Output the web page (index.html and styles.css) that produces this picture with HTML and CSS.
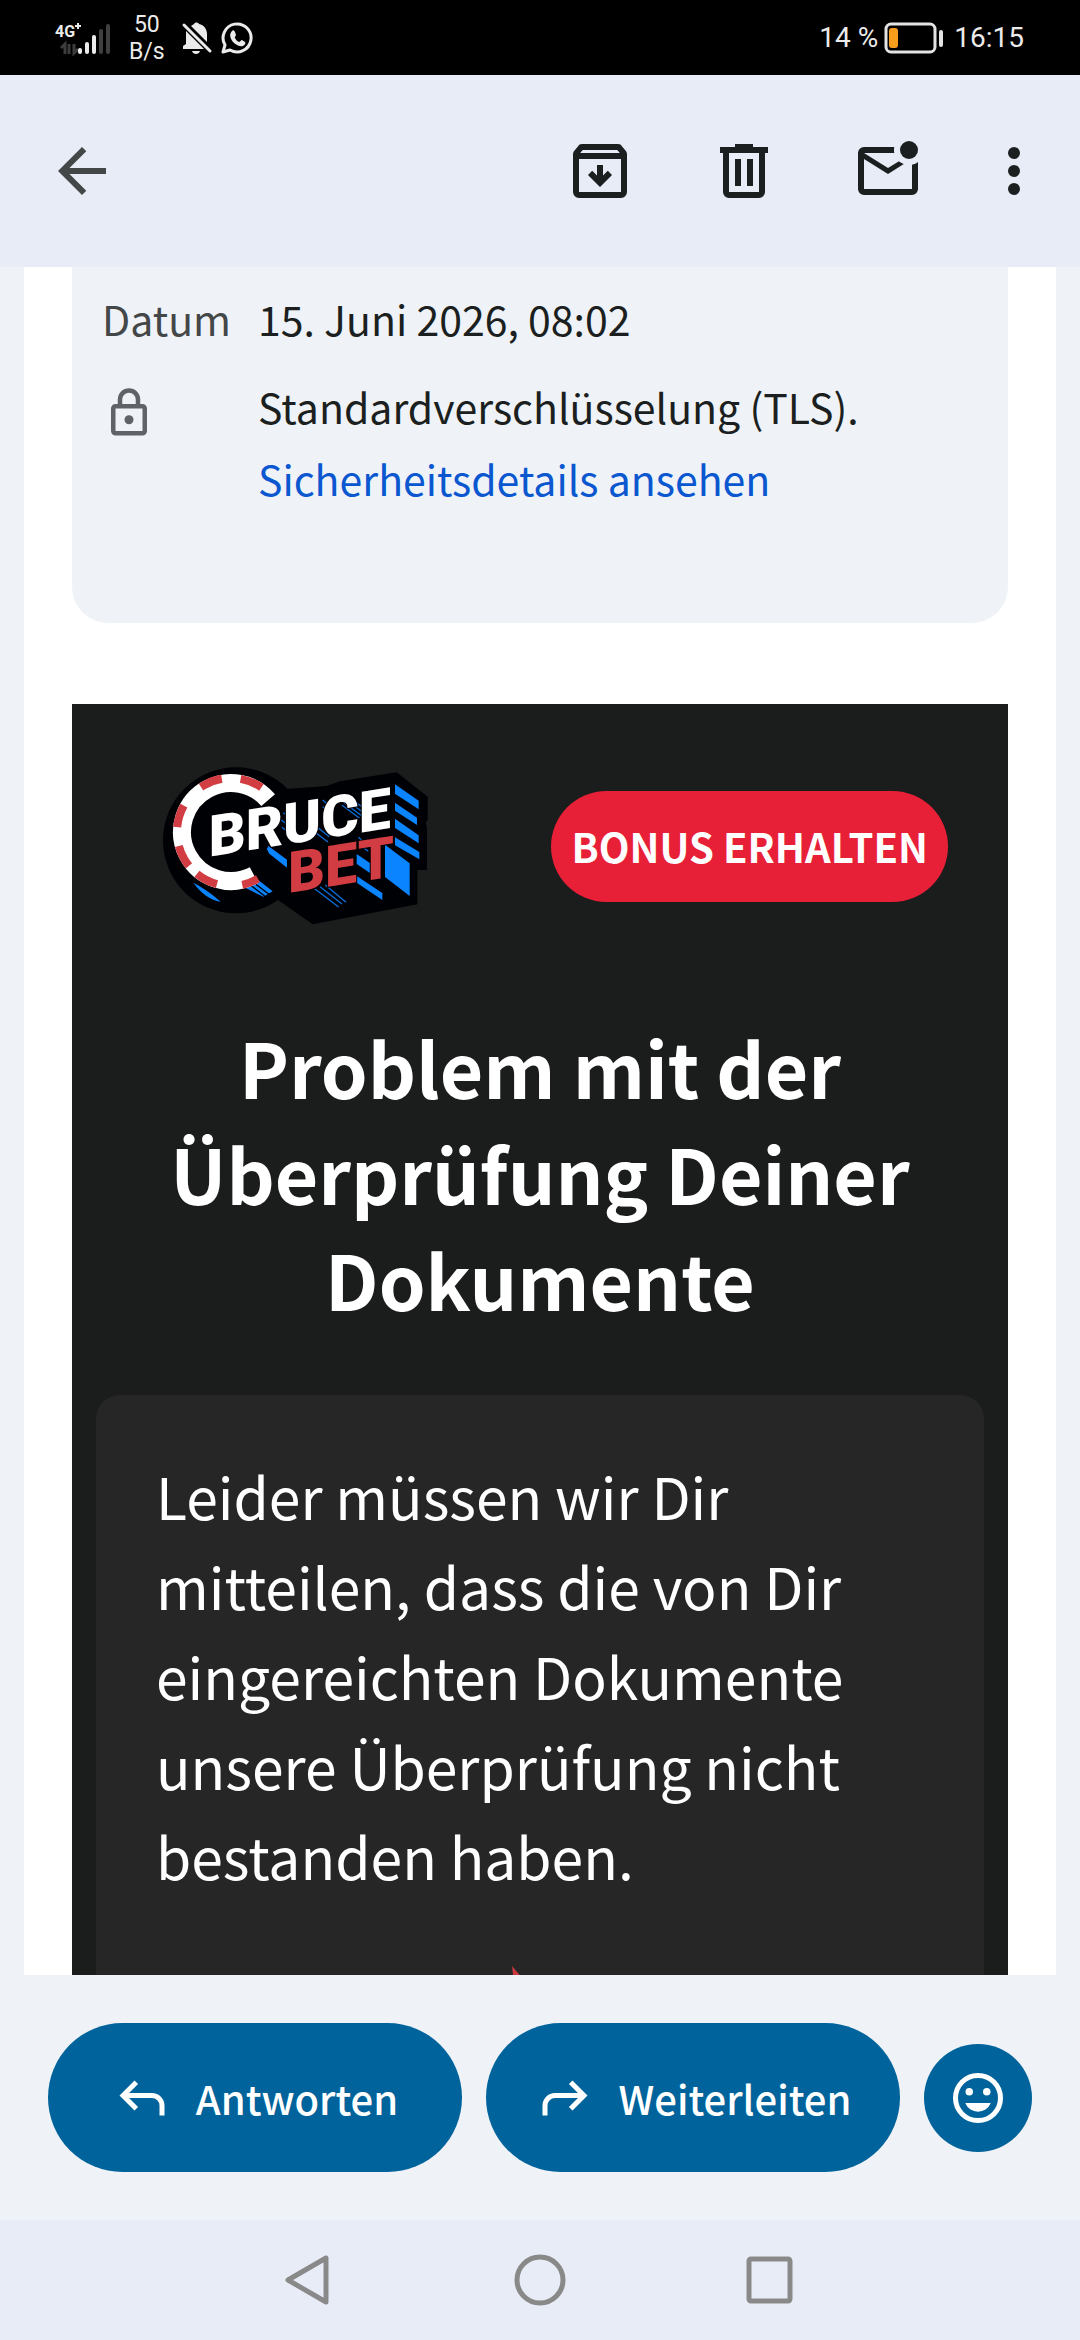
FILE: index.html
```html
<!DOCTYPE html>
<html lang="de">
<head>
    <meta charset="UTF-8">
    <meta name="viewport" content="width=device-width, initial-scale=1.0">
    <title>Problem mit der Überprüfung Deiner Dokumente</title>
    <link rel="stylesheet" href="styles.css">
</head>
<body>

    <!-- Status bar -->
    <div class="status">
        <div class="status-left">
            <svg class="signal" viewBox="0 0 56 36" aria-hidden="true">
                <text x="0" y="17" class="net">4G</text>
                <path d="M20 6h6M23 3v6" stroke="#ebebeb" stroke-width="2"/>
                <path d="M6 28l4-4v10M14 24v10M19 24v9l4-4" fill="none" stroke="#3c3c3c" stroke-width="3"/>
                <g fill="#ebebeb">
                    <rect x="23" y="28" width="4" height="6" rx="2"/>
                    <rect x="30" y="22" width="4" height="12" rx="2"/>
                    <rect x="37" y="15" width="4" height="19" rx="2"/>
                </g>
                <g fill="#3f3f3f">
                    <rect x="44" y="9" width="4" height="25" rx="2"/>
                    <rect x="51" y="4" width="4" height="30" rx="2"/>
                </g>
            </svg>
            <div class="speed">50<br>B/s</div>
            <svg class="status-icon bell" viewBox="0 0 32 32" aria-hidden="true">
                <path d="M5 9L23 27H2v-3l3-2zM10 4c1-1 2-1 3-2 1-2 4-2 5 0 5 1 8 5 8 10v8z" fill="#ebebeb"/>
                <path d="M11 29h8c-1 4-7 4-8 0z" fill="#ebebeb"/>
                <path d="M3 3l26 26" stroke="#ebebeb" stroke-width="3" stroke-linecap="round"/>
            </svg>
            <svg class="status-icon" viewBox="0 0 32 32" aria-hidden="true">
                <path d="M2 30l2-7a14 14 0 1 1 5 5z" fill="none" stroke="#ebebeb" stroke-width="3" stroke-linejoin="round"/>
                <path d="M11 9c1-1 2-1 3 1l1 3c0 1-2 2-1 3 1 2 2 3 4 4 1 0 2-2 3-2l3 2c1 1 0 3-2 4-3 1-7-1-10-4-3-4-4-8-1-11z" fill="#ebebeb"/>
            </svg>
        </div>
        <div class="status-right">
            <span>14 %</span>
            <svg class="battery" viewBox="0 0 60 34" aria-hidden="true">
                <rect x="2" y="3" width="49" height="28" rx="5" fill="none" stroke="#e4e4e4" stroke-width="3"/>
                <rect x="5" y="7" width="9" height="20" rx="3" fill="#f99d1c"/>
                <rect x="55" y="9" width="4" height="17" rx="2" fill="#e4e4e4"/>
            </svg>
            <span>16:15</span>
        </div>
    </div>

    <!-- Toolbar -->
    <header class="toolbar">
        <button class="icon-btn back" aria-label="Zurück">
            <svg viewBox="0 0 24 24"><path d="m7.825 13 5.6 5.6L12 20l-8-8 8-8 1.425 1.4-5.6 5.6H20v2Z"/></svg>
        </button>
        <button class="icon-btn" aria-label="Archivieren">
            <svg viewBox="0 0 24 24"><path fill-rule="evenodd" d="M5 21q-.825 0-1.413-.587Q3 19.825 3 19V6.525q0-.35.113-.675.112-.325.337-.6L4.7 3.725q.2-.35.5-.538Q5.5 3 6 3h12q.5 0 .8.187.3.188.5.538l1.25 1.525q.225.275.337.6.113.325.113.675V19q0 .825-.587 1.413Q19.825 21 19 21Zm.4-15h13.2l-.85-1H6.25ZM5 8v11h14V8Zm7 9.3 4-4-1.4-1.4-1.6 1.6V10h-2v3.5l-1.6-1.6L8 13.3Z"/></svg>
        </button>
        <button class="icon-btn" aria-label="Löschen">
            <svg viewBox="0 0 24 24"><path fill-rule="evenodd" d="M7 21q-.825 0-1.413-.587Q5 19.825 5 19V6H4V4h5V3h6v1h5v2h-1v13q0 .825-.587 1.413Q17.825 21 17 21ZM17 6H7v13h10ZM9 17h2V8H9Zm4 0h2V8h-2Z"/></svg>
        </button>
        <button class="icon-btn" aria-label="Als ungelesen markieren">
            <svg viewBox="0 0 24 24"><path fill-rule="evenodd" d="M4 20q-.825 0-1.413-.587Q2 18.825 2 18V6q0-.825.587-1.412Q3.175 4 4 4h10.1q-.1.5-.1 1t.1 1H4l8 5 3.65-2.275q.35.325.763.562.412.238.862.413L12 13 4 8v10h16V9.9q.575-.125 1.075-.35.5-.225.925-.55v9q0 .825-.587 1.413Q20.825 20 20 20Z"/><circle cx="19" cy="5" r="3"/></svg>
        </button>
        <button class="icon-btn more" aria-label="Weitere Optionen">
            <svg viewBox="0 0 24 24"><circle cx="12" cy="6" r="2"/><circle cx="12" cy="12" r="2"/><circle cx="12" cy="18" r="2"/></svg>
        </button>
    </header>

    <!-- Message -->
    <main class="message">
        <section class="details">
            <div class="details-row">
                <span class="label">Datum</span>
                <span>15. Juni 2026, 08:02</span>
            </div>
            <div class="details-row">
                <svg class="lock" viewBox="0 0 24 24" aria-hidden="true">
                    <rect x="5" y="9" width="14" height="12" rx="1" fill="none" stroke="#5f6368" stroke-width="2"/>
                    <path d="M8 9V6a4 4 0 0 1 8 0v3" fill="none" stroke="#5f6368" stroke-width="2"/>
                    <circle cx="12" cy="15" r="2" fill="#5f6368"/>
                </svg>
                <div>
                    Standardverschlüsselung (TLS).<br>
                    <a href="#">Sicherheitsdetails ansehen</a>
                </div>
            </div>
        </section>

        <article class="mail">
            <div class="mail-header">
                <svg class="logo" viewBox="66 75 804 486" role="img" aria-label="Bruce Bet">
                    <g fill="#000105">
                        <circle cx="288" cy="301" r="219"/>
                        <path d="M400 145l30 3 130-10 40-14 170-27 93 73v70l-6 6 4 20v124h-29v103l-314 60-118-83z"/>
                    </g>
                    <!-- blue depth -->
                    <g fill="#0a84ff">
                        <path d="M765 133l71 49v26l-71-47zM765 188l66 45v22l-66-43zM765 236l71 50v24l-71-46zM765 292l73 44v22l-73-42z"/>
                        <path d="M735 314l74 56v98l-74-57z"/>
                        <path d="M650 342l41 28v30l-41-28zM650 408l77 51v21l-77-52z"/>
                        <path d="M368 305l73 54v24l-53-42z"/>
                        <path d="M160 428q40 20 82 57-46-7-82-57z"/>
                        <path d="M350 416l48 38-28 16-66-32z"/>
                    </g>
                    <g stroke="#0a6fd8" stroke-width="4" fill="none">
                        <path d="M524 446l72 55M540 440l66 52M556 435l62 52"/>
                        <path d="M424 240l32 24M426 262l36 28M430 218l20 16M524 276l40 30M532 262l36 28M548 180l14 12M548 200l14 12"/>
                        <path d="M606 196l52 38M606 184l60 44M614 176l54 40M624 170l44 32M655 292l24 20M655 312l30 22"/>
                    </g>
                    <g stroke="#000105" stroke-width="4"><path d="M322 428l52 40M336 424l50 38"/></g>
                    <!-- chip -->
                    <circle cx="270" cy="272" r="124" fill="#000105"/>
                    <circle cx="273" cy="276" r="147" fill="none" stroke="#fff" stroke-width="54" pathLength="360" stroke-dasharray="257 103" transform="rotate(62 273 276)"/>
                    <circle cx="273" cy="276" r="162" fill="none" stroke="#d13d42" stroke-width="24" pathLength="360" stroke-dasharray="18 27 24 12 24 20 24 27 24 20 24 116" transform="rotate(60 273 276)"/>
                    <text x="206" y="350" class="logo-text white" transform="skewY(-9)" transform-origin="206 350">BRUCE</text>
                    <text x="444" y="459" class="logo-text red" transform="skewY(-9)" transform-origin="444 459">BET</text>
                </svg>
                <a class="bonus" href="#">BONUS ERHALTEN</a>
            </div>

            <h1>Problem mit der Überprüfung Deiner Dokumente</h1>

            <div class="mail-body">
                <p>Leider müssen wir Dir mitteilen, dass die von Dir eingereichten Dokumente unsere Überprüfung nicht bestanden haben.</p>
                <svg class="cross" viewBox="0 0 60 60" aria-hidden="true"><path d="M1 0l12 14 20 46H8z" fill="#c8383c"/></svg>
            </div>
        </article>
    </main>

    <!-- Reply actions -->
    <footer class="actions">
        <button class="action">
            <svg viewBox="0 0 24 24" aria-hidden="true"><path d="M19 19v-4q0-1.25-.875-2.125T16 12H6.825l3.6 3.6L9 17l-6-6 6-6 1.425 1.4-3.6 3.6H16q2.075 0 3.538 1.462Q21 12.925 21 15v4Z"/></svg>
            Antworten
        </button>
        <button class="action">
            <svg viewBox="0 0 24 24" aria-hidden="true"><path d="M5 19v-4q0-1.25.875-2.125T8 12h9.175l-3.6 3.6L15 17l6-6-6-6-1.425 1.4 3.6 3.6H8q-2.075 0-3.538 1.462Q3 12.925 3 15v4Z"/></svg>
            Weiterleiten
        </button>
        <button class="action emoji" aria-label="Reaktion hinzufügen">
            <svg viewBox="0 0 24 24"><circle cx="12" cy="12" r="9" fill="none" stroke="#fff" stroke-width="2"/><circle cx="8.5" cy="9.5" r="1.5"/><circle cx="15.5" cy="9.5" r="1.5"/><path d="M12 17.5q1.7 0 3.088-.962Q16.475 15.575 17.1 14H6.9q.625 1.575 2.012 2.538Q10.3 17.5 12 17.5Z"/></svg>
        </button>
    </footer>

    <!-- System navigation -->
    <nav class="navbar">
        <button aria-label="Zurück"><svg viewBox="0 0 60 60"><path d="M8 30L46 8v44z"/></svg></button>
        <button aria-label="Startbildschirm"><svg viewBox="0 0 60 60"><circle cx="30" cy="30" r="23"/></svg></button>
        <button aria-label="Letzte Apps"><svg viewBox="0 0 60 60"><rect x="9" y="9" width="41" height="42" rx="2"/></svg></button>
    </nav>

</body>
</html>
```
FILE: styles.css
```css
* {
    box-sizing: border-box;
}
body {
    margin: 0;
    height: 100vh;
    display: flex;
    flex-direction: column;
    overflow: hidden;
    background: #eff3f8;
    font-family: "Noto Sans CJK JP", "Noto Sans", sans-serif;
    color: #1c1f20;
}
button {
    padding: 0;
    border: none;
    background: none;
    font-family: inherit;
    cursor: pointer;
}
svg {
    display: block;
    flex: none;
}

/* Status bar */
.status {
    display: flex;
    justify-content: space-between;
    align-items: center;
    height: 75px;
    padding: 0 56px 0 55px;
    background: #000;
    color: #ebebeb;
}
.status-left,
.status-right {
    display: flex;
    align-items: center;
}
.signal {
    width: 56px;
    height: 36px;
}
.net {
    font: bold 16px Roboto, sans-serif;
    fill: #ebebeb;
}
.speed {
    margin: 0 16px 0 18px;
    font: 23px/27px Roboto, sans-serif;
    text-align: center;
}
.status-icon {
    width: 32px;
    height: 32px;
}
.bell {
    margin-right: 8px;
}
.status-right {
    font: 28px/40px Roboto, sans-serif;
}
.battery {
    width: 60px;
    height: 34px;
    margin: 0 10px 0 6px;
}

/* Toolbar */
.toolbar {
    display: flex;
    align-items: center;
    gap: 72px;
    height: 192px;
    padding: 0 30px 0 46px;
    background: #e8ecf6;
}
.icon-btn svg {
    width: 72px;
    height: 72px;
    fill: #1c1f20;
}
.back {
    margin-right: auto;
}
.back svg {
    fill: #444748;
}
.more {
    margin-left: -18px;
}

/* Message */
.message {
    flex: 1;
    min-height: 0;
    margin: 0 24px;
    padding: 0 48px;
    overflow: hidden;
    background: #fff;
}
.details {
    padding: 15px 30px 109px;
    border-radius: 0 0 36px 36px;
    background: #eff3f8;
    font-size: 41px;
    line-height: 72px;
}
.details-row {
    display: grid;
    grid-template-columns: 156px 1fr;
}
.details-row + .details-row {
    margin-top: 16px;
}
.label {
    color: #444748;
}
.lock {
    width: 54px;
    height: 54px;
    margin-top: 16px;
}
.details a {
    color: #0b57d0;
    text-decoration: none;
}

.mail {
    margin-top: 81px;
    padding: 61px 24px 0;
    background: #1b1c1c;
    color: #fff;
}
.mail-header {
    display: flex;
    justify-content: space-between;
    align-items: center;
    padding: 0 36px 0 66px;
}
.logo {
    width: 268px;
    height: 162px;
}
.logo-text {
    font: 900 172px Roboto, sans-serif;
    stroke: #000105;
    stroke-width: 6px;
    paint-order: stroke;
}
.white {
    fill: #fff;
}
.red {
    fill: #d13d42;
}
.bonus {
    padding: 0 20px;
    border-radius: 56px;
    background: #e82037;
    color: #fff;
    font-size: 40px;
    font-weight: bold;
    line-height: 111px;
    text-decoration: none;
}
.mail h1 {
    margin: 87px 0 63px;
    font-size: 75px;
    line-height: 106px;
    text-align: center;
}
.mail-body {
    height: 800px;
    padding: 55px 60px;
    border-radius: 24px;
    background: #262626;
}
.mail-body p {
    margin: 0;
    font-size: 57px;
    line-height: 90px;
}
.cross {
    width: 60px;
    height: 60px;
    margin: 66px auto 0 355px;
}

/* Reply actions */
.actions {
    display: flex;
    align-items: center;
    gap: 24px;
    padding: 48px;
}
.action {
    flex: 1;
    display: flex;
    align-items: center;
    justify-content: center;
    gap: 24px;
    height: 149px;
    border-radius: 75px;
    background: #00639b;
    color: #fff;
    font-size: 40px;
    font-weight: 500;
}
.action svg {
    width: 60px;
    height: 60px;
    fill: #fff;
}
.emoji {
    flex: none;
    width: 108px;
    height: 108px;
}

/* System navigation */
.navbar {
    display: flex;
    justify-content: center;
    align-items: center;
    gap: 170px;
    height: 120px;
    background: #e8ecf6;
}
.navbar svg {
    width: 60px;
    height: 60px;
    fill: none;
    stroke: #898989;
    stroke-width: 5px;
    stroke-linejoin: round;
}
```
